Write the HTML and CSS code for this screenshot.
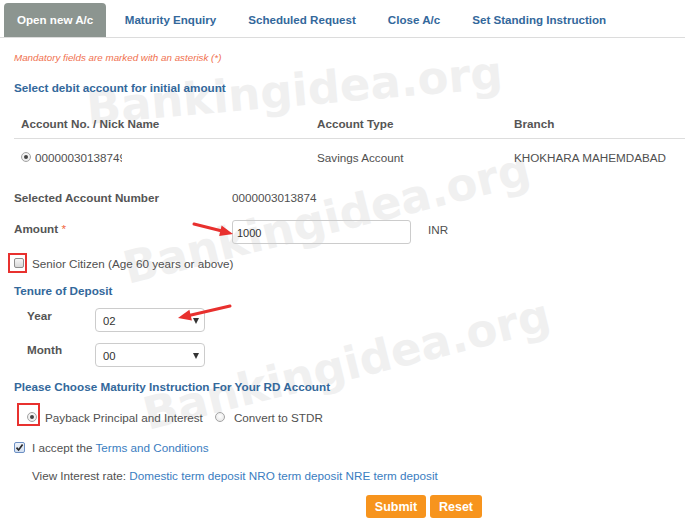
FILE: index.html
```html
<!DOCTYPE html>
<html>
<head>
<meta charset="utf-8">
<title>Open new A/c</title>
<link rel="stylesheet" href="styles.css">
</head>
<body>
<div class="watermarks" aria-hidden="true">
  <svg width="685" height="520" viewBox="0 0 685 520">
    <text x="88" y="124" transform="rotate(-5 88 124)">Bankingidea.org</text>
    <text x="128" y="284" transform="rotate(-14 128 284)">Bankingidea.org</text>
    <text x="148" y="430" transform="rotate(-14 148 430)">Bankingidea.org</text>
  </svg>
</div>

<nav class="tabs">
  <span class="tab active">Open new A/c</span>
  <span class="tab">Maturity Enquiry</span>
  <span class="tab">Scheduled Request</span>
  <span class="tab">Close A/c</span>
  <span class="tab">Set Standing Instruction</span>
</nav>

<main class="content">
  <p class="note">Mandatory fields are marked with an asterisk (*)</p>
  <h2 class="section sec-debit">Select debit account for initial amount</h2>

  <div class="acct-table">
    <div class="th">Account No. / Nick Name</div>
    <div class="th">Account Type</div>
    <div class="th">Branch</div>
    <div class="td"><span class="radio on"></span><span class="clip">00000030138749</span></div>
    <div class="td">Savings Account</div>
    <div class="td">KHOKHARA MAHEMDABAD</div>
  </div>

  <div class="field row-selected">
    <span class="label">Selected Account Number</span>
    <span class="value">0000003013874</span>
  </div>

  <div class="field row-amount">
    <span class="label">Amount <span class="req">*</span></span>
    <span class="input">1000</span>
    <span class="unit">INR</span>
  </div>

  <div class="field row-senior">
    <span class="hl hl-check"><span class="checkbox"></span></span>
    <span class="opt-label">Senior Citizen (Age 60 years or above)</span>
  </div>

  <h2 class="section sec-tenure">Tenure of Deposit</h2>

  <div class="field select-row row-year">
    <span class="sel-label">Year</span>
    <span class="select"><span>02</span><span class="caret"></span></span>
  </div>
  <div class="field select-row row-month">
    <span class="sel-label">Month</span>
    <span class="select"><span>00</span><span class="caret"></span></span>
  </div>

  <h2 class="section sec-maturity">Please Choose Maturity Instruction For Your RD Account</h2>

  <div class="field row-radio">
    <span class="hl hl-radio"><span class="radio on"></span></span>
    <span class="opt-label">Payback Principal and Interest</span>
    <span class="radio second"></span>
    <span class="opt-label wide">Convert to STDR</span>
  </div>

  <div class="field row-accept">
    <span class="checkbox checked">
      <svg width="9" height="9" viewBox="0 0 9 9"><path d="M1.5 4.6 L3.6 7 L7.6 1.6" fill="none" stroke="#2b2b2b" stroke-width="1.7"/></svg>
    </span>
    <span class="accept-text">I accept the <a class="link">Terms and Conditions</a></span>
  </div>

  <div class="row-view">
    View Interest rate: <a class="link">Domestic term deposit</a> <a class="link">NRO term deposit</a> <a class="link">NRE term deposit</a>
  </div>

  <div class="buttons">
    <button class="btn btn-submit">Submit</button>
    <button class="btn btn-reset">Reset</button>
  </div>
</main>

<div class="annotations" aria-hidden="true">
  <svg width="685" height="520" viewBox="0 0 685 520">
    <line x1="194" y1="224" x2="222" y2="231" stroke="#e8302e" stroke-width="3" stroke-linecap="round"/>
    <polygon points="233,234 221.6,225.6 219.2,236" fill="#e8302e"/>
    <line x1="230" y1="306" x2="189" y2="315.5" stroke="#e8302e" stroke-width="3" stroke-linecap="round"/>
    <polygon points="178,318 189.4,309.8 191.9,320.4" fill="#e8302e"/>
  </svg>
</div>
</body>
</html>
```

FILE: styles.css
```css
html {
  background: #fff;
}
body {
  margin: 0;
  width: 685px;
  height: 520px;
  overflow: hidden;
  font-family: "Liberation Sans", Arial, sans-serif;
  font-size: 11.7px;
  color: #505050;
}

.watermarks {
  position: absolute;
  left: 0;
  top: 0;
  z-index: -1;
}
.watermarks text {
  font-family: "DejaVu Sans", Verdana, sans-serif;
  font-weight: bold;
  font-size: 45px;
  fill: #f0f0f0;
}

.annotations {
  position: absolute;
  left: 0;
  top: 0;
  pointer-events: none;
}

/* Tabs */
.tabs {
  display: flex;
  height: 34px;
  padding: 3px 0 0 4px;
  border-bottom: 1px solid #dcdcdc;
}
.tab {
  padding: 0 14.5px;
  margin-right: 3px;
  line-height: 34px;
  font-size: 11.6px;
  font-weight: bold;
  color: #33689b;
  white-space: nowrap;
}
.tab.active {
  padding: 0 13px;
  margin-right: 4px;
  background: #8c9590;
  color: #fff;
  border-radius: 4px 4px 0 0;
}

/* Content */
.content {
  padding-left: 14px;
}
.note {
  margin: 10px 0 0;
  height: 20px;
  line-height: 20px;
  font-size: 9.8px;
  font-style: italic;
  color: #f0704e;
}
.section {
  margin: 10px 0 0;
  height: 20px;
  line-height: 20px;
  font-size: 11.7px;
  font-weight: bold;
  color: #33689b;
}
.sec-tenure { margin-top: 8px; }
.sec-maturity { margin-top: 10px; }

.acct-table {
  display: grid;
  grid-template-columns: 296px 197px 1fr;
  margin-top: 13px;
}
.th {
  height: 27px;
  line-height: 26px;
  padding-left: 7px;
  border-bottom: 1px solid #dddddd;
  font-weight: bold;
  color: #555;
}
.td {
  height: 36px;
  display: flex;
  align-items: center;
  padding-left: 7px;
  white-space: nowrap;
}
.clip {
  display: inline-block;
  width: 87px;
  margin-left: 4px;
  overflow: hidden;
  white-space: nowrap;
}

.field {
  display: flex;
  align-items: center;
}
.label {
  width: 218px;
  flex: none;
  font-weight: bold;
  color: #555;
}
.row-selected {
  margin-top: 12px;
  height: 20px;
}
.row-amount {
  margin-top: 13px;
  height: 24px;
  align-items: flex-start;
}
.row-amount .label {
  line-height: 18px;
}
.req {
  color: #f0643c;
  font-weight: normal;
}
.input {
  width: 179px;
  height: 24px;
  box-sizing: border-box;
  padding: 1px 0 0 4px;
  border: 1px solid #cccccc;
  border-radius: 3px;
  line-height: 22px;
  font-size: 11px;
  color: #333;
}
.unit {
  margin-left: 17px;
  line-height: 20px;
}

.row-senior {
  margin-top: 9px;
  height: 20px;
}
.hl {
  display: flex;
  align-items: center;
  box-sizing: border-box;
  border: 2px solid #e8312f;
  flex: none;
}
.hl-check {
  width: 19px;
  height: 20px;
  margin-left: -6px;
  padding-left: 4px;
}
.opt-label {
  margin-left: 5px;
  white-space: nowrap;
}
.opt-label.wide {
  margin-left: 9px;
}

.checkbox {
  display: inline-flex;
  align-items: center;
  justify-content: center;
  width: 10px;
  height: 10px;
  box-sizing: border-box;
  border: 1px solid #8e8e8e;
  border-radius: 2px;
  background: linear-gradient(#f6f6f6, #d8d8d8);
  flex: none;
}
.checkbox.checked {
  width: 11px;
  height: 11px;
  border-color: #6d90c4;
  background: linear-gradient(#eef3fa, #d3e0f1);
}
.checkbox svg {
  display: block;
}

.radio {
  display: inline-flex;
  align-items: center;
  justify-content: center;
  width: 10px;
  height: 10px;
  box-sizing: border-box;
  border: 1px solid #a4a4a4;
  border-radius: 50%;
  background: radial-gradient(circle at 50% 40%, #ffffff, #e2e2e2);
  flex: none;
}
.radio.on::after {
  content: "";
  width: 4px;
  height: 4px;
  border-radius: 50%;
  background: #444;
}
.radio.second {
  margin-left: 12px;
}

.select-row {
  height: 24px;
  padding-left: 13px;
  align-items: flex-start;
}
.row-year { margin-top: 7px; }
.row-month { margin-top: 11px; }
.sel-label {
  width: 68px;
  flex: none;
  line-height: 16px;
  font-weight: bold;
  color: #555;
}
.row-month .sel-label {
  line-height: 14px;
}
.select {
  width: 110px;
  height: 24px;
  box-sizing: border-box;
  display: flex;
  justify-content: space-between;
  align-items: center;
  padding: 2px 5px 0 7px;
  border: 1px solid #cccccc;
  border-radius: 4px;
  font-size: 11.3px;
  color: #333;
}
.caret {
  width: 0;
  height: 0;
  border-left: 3.5px solid transparent;
  border-right: 3.5px solid transparent;
  border-top: 6px solid #333;
}

.row-radio {
  margin-top: 6px;
  height: 28px;
}
.hl-radio {
  align-self: flex-start;
  width: 23px;
  height: 23px;
  margin-left: 3px;
  padding: 5px 0 0 8px;
}

.row-accept {
  margin-top: 6px;
  height: 20px;
}
.accept-text {
  margin-left: 7px;
}
.link {
  color: #3a7dbf;
  text-decoration: none;
}
.row-view {
  margin-top: 9px;
  height: 20px;
  line-height: 20px;
  padding-left: 18px;
  white-space: nowrap;
}

.buttons {
  display: flex;
  gap: 4px;
  margin-top: 9px;
  padding-left: 352px;
}
.btn {
  height: 23px;
  padding: 0;
  border: none;
  border-radius: 3px;
  background: #f7941d;
  color: #fff;
  font-family: "Liberation Sans", Arial, sans-serif;
  font-size: 12.5px;
  font-weight: bold;
  text-align: center;
}
.btn-submit { width: 60px; }
.btn-reset { width: 52px; }
```
